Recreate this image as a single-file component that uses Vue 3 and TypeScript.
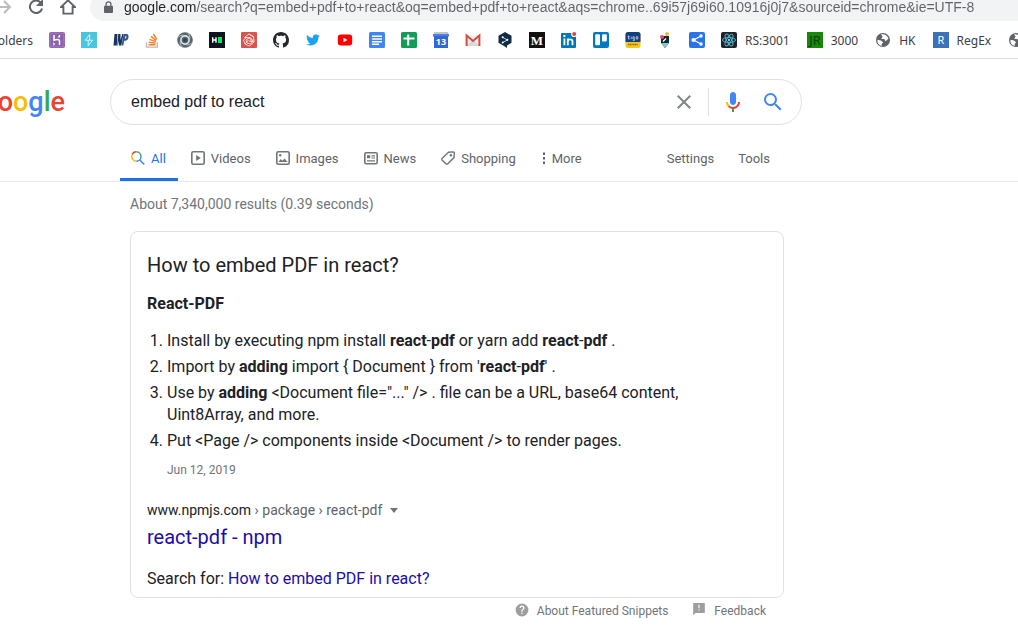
<script setup lang="ts">
import { ref } from 'vue'

interface Step {
  parts: { text: string; strong?: boolean }[]
}

const address = ref(
  'google.com/search?q=embed+pdf+to+react&oq=embed+pdf+to+react&aqs=chrome..69i57j69i60.10916j0j7&sourceid=chrome&ie=UTF-8',
)
const query = ref('embed pdf to react')

const steps: Step[] = [
  {
    parts: [
      { text: 'Install by executing npm install ' },
      { text: 'react', strong: true },
      { text: '-' },
      { text: 'pdf', strong: true },
      { text: ' or yarn add ' },
      { text: 'react', strong: true },
      { text: '-' },
      { text: 'pdf', strong: true },
      { text: ' .' },
    ],
  },
  {
    parts: [
      { text: 'Import by ' },
      { text: 'adding', strong: true },
      { text: " import { Document } from '" },
      { text: 'react', strong: true },
      { text: '-' },
      { text: 'pdf', strong: true },
      { text: "' ." },
    ],
  },
  {
    parts: [
      { text: 'Use by ' },
      { text: 'adding', strong: true },
      { text: ' <Document file="..." /> . file can be a URL, base64 content, Uint8Array, and more.' },
    ],
  },
  { parts: [{ text: 'Put <Page /> components inside <Document /> to render pages.' }] },
]
</script>

<template>
  <div class="browser">
    <div class="toolbar">
      <button class="nav" aria-label="Forward">
        <svg viewBox="0 0 16 16"><path d="M0 8h14M8 2l6 6-6 6" fill="none" stroke="#babcbe" stroke-width="2" /></svg>
      </button>
      <button class="nav" aria-label="Reload">
        <svg viewBox="0 0 16 16"><path d="M13.2 4.2A6.2 6.2 0 1 0 14.1 9.4" fill="none" stroke="#5f6368" stroke-width="2" /><path d="M15 0v7H8z" fill="#5f6368" /></svg>
      </button>
      <button class="nav" aria-label="Home">
        <svg viewBox="0 0 16 16"><path d="M8 1.3 1 8h2.4v6.6h9.2V8H15z" fill="none" stroke="#5f6368" stroke-width="1.9" /></svg>
      </button>
      <div class="omnibox">
        <svg class="lock" viewBox="0 0 10 14"><path d="M1 5h8a1 1 0 0 1 1 1v6a1 1 0 0 1-1 1H1a1 1 0 0 1-1-1V6a1 1 0 0 1 1-1z" fill="#5f6368" /><path d="M2.3 6V3.5a2.7 2.7 0 0 1 5.4 0V6" fill="none" stroke="#5f6368" stroke-width="1.4" /></svg>
        <input v-model="address" class="address" type="text" aria-label="Address" spellcheck="false" />
      </div>
    </div>

    <nav class="bookmarks" aria-label="Bookmarks">
      <a href="#" class="bm folder">Folders</a>
      <a href="#" class="bm" aria-label="Heroku">
        <svg viewBox="0 0 16 16"><rect width="16" height="16" rx="2" fill="#8c62ad" /><rect x="1.2" y="1.2" width="13.6" height="13.6" rx="1" fill="none" stroke="#a98ac3" stroke-width=".7" /><path d="M5 3v5.4c1.8-.8 5.5-1.5 5.5.6v4M10.7 3c0 1-.5 1.8-1.2 2.6" fill="none" stroke="#fff" stroke-width="1.5" /><path d="M4.3 10.2 6.2 12l-1.9 1.7z" fill="#fff" /></svg>
      </a>
      <a href="#" class="bm" aria-label="Strapi">
        <svg viewBox="0 0 16 16"><rect width="16" height="16" fill="#49c5dd" /><path d="M8.7 2.5 4.2 8.2h7.4L7.2 13.7M8.7 2.5v5.7M7.2 8.4v5.3" fill="none" stroke="#d9f6fb" stroke-width="1" /></svg>
      </a>
      <a href="#" class="bm" aria-label="WP">
        <svg viewBox="0 0 16 16"><path d="M1.500 2h3L3.800 13.500H.5zM5.300 2h2.200v6L9.300 2h1.200L8.300 13.500H6L5.500 9l-.7 4.500h-.6z" fill="#17335f" /><path d="M10.600 2h2.900c3 0 2.700 6-.8 6.800h-1.500L10.300 13.500H8.600z" fill="#2f5687" /><path d="M12.300 4h.7c.9 0 .4 2.600-.5 2.600h-.6z" fill="#dce5ef" /></svg>
      </a>
      <a href="#" class="bm" aria-label="Stack Overflow">
        <svg viewBox="0 0 16 16"><path d="M1.500 10.200v4.900h10.800v-4.900" fill="none" stroke="#bcbbbb" stroke-width="1.400" /><path d="M3.500 12.700h7M3.700 10.200l6.900.9M4.400 7.300l6.300 2.300M6 4.400l5.100 4M8.300 2l3.600 5.300" fill="none" stroke="#f48024" stroke-width="1.400" /></svg>
      </a>
      <a href="#" class="bm" aria-label="Spiral">
        <svg viewBox="0 0 16 16"><circle cx="8" cy="8" r="7.8" fill="#58666d" /><circle cx="8" cy="8" r="4.1" fill="none" stroke="#dce2e4" stroke-width="1.6" /><path d="M1 5.500C2.500 3.200 5 2.700 7 3.500M15 10.500c-1.500 2.300-4 2.800-6 2M10.500 1c2.300 1.500 2.800 4 2 6M5.500 15c-2.300-1.500-2.800-4-2-6" fill="none" stroke="#bcc7ca" stroke-width="1" /><circle cx="8" cy="8" r="2" fill="#37474f" /></svg>
      </a>
      <a href="#" class="bm" aria-label="HackerRank">
        <svg viewBox="0 0 16 16"><rect width="16" height="16" fill="#0e141e" /><path d="M3.700 5.200v5.600M7 5.200v5.600M3.700 8H7" stroke="#fff" stroke-width="1.400" /><path d="M9 5h4v6H9z" fill="#00ea64" /></svg>
      </a>
      <a href="#" class="bm" aria-label="Knot">
        <svg viewBox="0 0 16 16"><rect width="16" height="16" rx="1" fill="#d9544d" /><g fill="none" stroke="#f8d9d6" stroke-width="1"><path d="M3.500 5.500 8 2l4.500 2.500L13 10l-4.500 4L4 12 2.500 8l3-2.500L10 6l2 3-2.500 3L6 11 5 8l3-2 2.500 2L9 10" /><path d="M8 2l5 3.500M13 10 8 9M4 12l3.500-4M3.500 5.500 9 5.500" /></g></svg>
      </a>
      <a href="#" class="bm" aria-label="GitHub">
        <svg viewBox="0 0 16 16"><path fill="#24292e" d="M8 0C3.58 0 0 3.58 0 8c0 3.54 2.29 6.53 5.47 7.59.4.07.55-.17.55-.38 0-.19-.01-.82-.01-1.49-2.01.37-2.53-.49-2.69-.94-.09-.23-.48-.94-.82-1.13-.28-.15-.68-.52-.01-.53.63-.01 1.08.58 1.23.82.72 1.21 1.87.87 2.33.66.07-.52.28-.87.51-1.07-1.78-.2-3.64-.89-3.64-3.95 0-.87.31-1.59.82-2.15-.08-.2-.36-1.02.08-2.12 0 0 .67-.21 2.2.82.64-.18 1.32-.27 2-.27s1.36.09 2 .27c1.53-1.04 2.2-.82 2.2-.82.44 1.1.16 1.92.08 2.12.51.56.82 1.27.82 2.15 0 3.07-1.87 3.75-3.65 3.95.29.25.54.73.54 1.48 0 1.07-.01 1.93-.01 2.2 0 .21.15.46.55.38A8.01 8.01 0 0 0 16 8c0-4.42-3.58-8-8-8z" /></svg>
      </a>
      <a href="#" class="bm" aria-label="Twitter">
        <svg viewBox="-2 -2 28 28"><path fill="#1da1f2" d="M23.95 4.57a10 10 0 0 1-2.82.77 4.96 4.96 0 0 0 2.16-2.72c-.95.55-2 .95-3.13 1.18a4.92 4.92 0 0 0-8.38 4.48C7.69 8.1 4.07 6.13 1.64 3.16a4.92 4.92 0 0 0 1.52 6.57 4.9 4.9 0 0 1-2.23-.61v.06a4.92 4.92 0 0 0 3.95 4.83 5 5 0 0 1-2.21.08 4.94 4.94 0 0 0 4.6 3.42A9.87 9.87 0 0 1 0 19.54a13.99 13.99 0 0 0 7.55 2.21c9.05 0 14-7.5 14-13.98 0-.21 0-.42-.02-.63a9.94 9.94 0 0 0 2.42-2.57z" /></svg>
      </a>
      <a href="#" class="bm" aria-label="YouTube">
        <svg viewBox="0 0 16 16"><rect x=".8" y="2.6" width="14.4" height="10.8" rx="3" fill="#f00" /><path d="M6.5 5.8v4.4L10.4 8z" fill="#fff" /></svg>
      </a>
      <a href="#" class="bm" aria-label="Docs">
        <svg viewBox="0 0 16 16"><rect width="16" height="16" rx="1.5" fill="#4285f4" /><path d="M3 4.2h10M3 7h10M3 9.7h10M3 12.3h7" stroke="#fff" stroke-width="1.4" /></svg>
      </a>
      <a href="#" class="bm" aria-label="Sheets">
        <svg viewBox="0 0 16 16"><rect width="16" height="16" rx="1.5" fill="#0f9d58" /><path d="M2.5 6.5h11M7.2 2.5v11" stroke="#fff" stroke-width="2" /></svg>
      </a>
      <a href="#" class="bm" aria-label="Calendar">
        <svg viewBox="0 0 16 16"><path d="M1 0h14v5H1z" fill="#c3c5c9" /><path d="M0 2h16v2l-1 1v11H1V5L0 4z" fill="#3367d6" /><path d="M0 2h16v2H0z" fill="#4f80e3" /><text x="8" y="13" text-anchor="middle" font-size="9" font-weight="700" fill="#fff">13</text></svg>
      </a>
      <a href="#" class="bm" aria-label="Gmail">
        <svg viewBox="0 0 16 16"><path d="M1 3h14v11H1z" fill="#f1f1f1" /><path d="M1 14 7 8.5h2L15 14z" fill="#d9d9d9" /><path d="M1.6 14V3.5L8 9l6.400-5.500V14" fill="none" stroke="#d54b3d" stroke-width="2" /></svg>
      </a>
      <a href="#" class="bm" aria-label="DeepL">
        <svg viewBox="0 0 16 16"><path d="M8 0 14.5 3.8v7L10 13.5v2.5L7 14 1.5 10.8v-7z" fill="#0f2b46" /><path d="M5.5 5.3 10.5 8l-5 2.5" fill="none" stroke="#d7dde2" stroke-width=".9" /><circle cx="5.700" cy="5.200" r="1" fill="#fff" /><circle cx="10.400" cy="7.800" r="1" fill="#fff" /><circle cx="5.700" cy="10.500" r="1" fill="#fff" /></svg>
      </a>
      <a href="#" class="bm" aria-label="Medium">
        <svg viewBox="0 0 16 16"><rect width="16" height="16" fill="#12100e" /><text x="8" y="12.5" text-anchor="middle" font-size="13" font-weight="700" class="serif" fill="#fff">M</text></svg>
      </a>
      <a href="#" class="bm" aria-label="LinkedIn">
        <svg viewBox="0 0 16 16"><rect y="1" width="15" height="15" rx="1" fill="#0077b5" /><path d="M3.400 6.500v6.700M6.800 13.200V6.500M6.800 9.600c0-3 4.700-3 4.700 0v3.600" fill="none" stroke="#fff" stroke-width="1.800" /><circle cx="3.400" cy="4" r="1.200" fill="#fff" /><circle cx="13" cy="2.200" r="2.800" fill="#fff" /><circle cx="13.200" cy="2" r="2" fill="#ef403d" /></svg>
      </a>
      <a href="#" class="bm" aria-label="Trello">
        <svg viewBox="0 0 16 16"><rect width="16" height="16" rx="2" fill="#0079bf" /><rect x="2.2" y="2.2" width="4.8" height="11" rx="1" fill="#fff" /><rect x="9" y="2.2" width="4.8" height="7.3" rx="1" fill="#fff" /></svg>
      </a>
      <a href="#" class="bm" aria-label="Tigo Sports">
        <svg viewBox="0 0 16 16"><rect x=".5" width="15" height="16" rx="2.5" fill="#f5c51c" /><path d="M3 0h10q2.500 0 2.500 2.500V10H.5V2.500Q.5 0 3 0z" fill="#15407f" /><path d="M3.500 3.500v3.500h1.300M2.700 4.700h2.100M6.200 4.600v2.600M8.900 4.700h-1v2.300h1.400V4.600M9.300 7v1.600H7.800M11.200 4.700h1.600v2.300h-1.600z" fill="none" stroke="#dfe7f1" stroke-width=".7" /><path d="M3 12.500h10" stroke="#806d2b" stroke-width="1.400" stroke-dasharray="1.200 .5" /></svg>
      </a>
      <a href="#" class="bm" aria-label="Pencil">
        <svg viewBox="0 0 16 16"><path d="M4 4h8v7l-4 5-4-5z" fill="#0e2b3c" /><path d="M4 11h8l-4 5z" fill="#8ac7bd" /><circle cx="5" cy="5" r="2" fill="#ef4a55" /><circle cx="10" cy="2" r="2" fill="#f6b63c" /><path d="m6 9.500 3-3" stroke="#fff" stroke-width="1.200" /></svg>
      </a>
      <a href="#" class="bm" aria-label="Share">
        <svg viewBox="0 0 16 16"><rect width="16" height="16" rx="2" fill="#2874e8" /><path d="M12 4 4.500 8l7.500 4" fill="none" stroke="#fff" stroke-width="1.100" /><circle cx="12" cy="4" r="1.700" fill="#fff" /><circle cx="4.500" cy="8" r="2.100" fill="#fff" /><circle cx="12" cy="12" r="1.700" fill="#fff" /></svg>
      </a>
      <a href="#" class="bm">
        <svg viewBox="0 0 16 16"><rect width="16" height="16" rx="2" fill="#20232a" /><g fill="none" stroke="#53b9d1" stroke-width=".9"><ellipse cx="8" cy="8" rx="6.6" ry="2.5" /><ellipse cx="8" cy="8" rx="6.6" ry="2.5" transform="rotate(60 8 8)" /><ellipse cx="8" cy="8" rx="6.6" ry="2.5" transform="rotate(120 8 8)" /></g><circle cx="8" cy="8" r="1.2" fill="#61dafb" /></svg>
        <span>RS:3001</span>
      </a>
      <a href="#" class="bm">
        <svg viewBox="0 0 16 16"><rect width="16" height="16" fill="#148a08" /><text x="8" y="13" text-anchor="middle" font-size="13" fill="#173a12">JR</text></svg>
        <span>3000</span>
      </a>
      <a href="#" class="bm">
        <svg viewBox="0 0 16 16"><circle cx="8" cy="8" r="7" fill="#5f6368" /><path d="M2.500 7.800 6 8.500l2.200 2-1.500 1.200v2.200C4 13.500 2 11 2.500 7.800zM6 2.500C9.500 1.600 12.800 4 13.500 6.700L10.500 9.200 9.300 6.900 6.300 7 7.600 4.500z" fill="#fff" /></svg>
        <span>HK</span>
      </a>
      <a href="#" class="bm">
        <svg viewBox="0 0 16 16"><rect width="16" height="16" fill="#3d72b8" /><text x="8" y="12" text-anchor="middle" font-size="11" fill="#fff">R</text></svg>
        <span>RegEx</span>
      </a>
      <a href="#" class="bm" aria-label="Site">
        <svg viewBox="0 0 16 16"><circle cx="8" cy="8" r="7" fill="#5f6368" /><path d="M2.500 7.800 6 8.500l2.200 2-1.500 1.200v2.200C4 13.500 2 11 2.500 7.800zM6 2.500C9.500 1.600 12.800 4 13.500 6.700L10.500 9.200 9.300 6.900 6.300 7 7.600 4.500z" fill="#fff" /></svg>
      </a>
    </nav>
  </div>

  <header class="header">
    <div class="search-row">
      <a href="#" class="logo" aria-label="Google"><span class="blue">G</span><span class="red">o</span><span class="yellow">o</span><span class="blue">g</span><span class="green">l</span><span class="red">e</span></a>
      <form class="search" role="search" @submit.prevent>
        <input v-model="query" class="query" type="text" aria-label="Search" spellcheck="false" />
        <button type="button" class="clear" aria-label="Clear" @click="query = ''">
          <svg viewBox="0 0 24 24"><path fill="#80868b" d="M19 6.410L17.590 5 12 10.590 6.410 5 5 6.410 10.590 12 5 17.590 6.410 19 12 13.410 17.590 19 19 17.590 13.410 12z" /></svg>
        </button>
        <span class="divider"></span>
        <button type="button" class="tool" aria-label="Search by voice">
          <svg viewBox="0 0 24 24"><path fill="#4285f4" d="m12 15c1.660 0 3-1.310 3-2.970v-7.020c0-1.660-1.340-3.010-3-3.010s-3 1.340-3 3.010v7.020c0 1.660 1.340 2.970 3 2.970z" /><path fill="#34a853" d="m11 18.080h2v3.920h-2z" /><path fill="#fbbc05" d="m7.050 16.870c-1.270-1.330-2.050-2.830-2.050-4.870h2c0 1.450.56 2.420 1.470 3.380v.32l-1.150 1.180z" /><path fill="#ea4335" d="m12 16.930a4.970 5.250 0 0 1-3.540-1.550l-1.410 1.490c1.260 1.340 3.020 2.130 4.950 2.130 3.870 0 6.990-2.920 6.990-7h-1.990c0 2.920-2.240 4.930-5 4.930z" /></svg>
        </button>
        <button type="submit" class="tool" aria-label="Google Search">
          <svg viewBox="0 0 24 24"><path fill="#4285f4" d="M15.500 14h-.79l-.28-.27A6.470 6.470 0 0 0 16 9.500 6.500 6.500 0 1 0 9.500 16c1.610 0 3.090-.59 4.230-1.570l.27.28v.79l5 4.990L20.490 19l-4.990-5zm-6 0C7.010 14 5 11.990 5 9.500S7.010 5 9.500 5 14 7.010 14 9.500 11.990 14 9.500 14z" /></svg>
        </button>
      </form>
    </div>

    <nav class="tabs" aria-label="Search types">
      <a href="#" class="tab active" aria-current="page">
        <svg viewBox="0 0 16 16"><g fill="none" stroke-width="1.500"><path d="M2.200 4.500A4.700 4.700 0 0 1 6.300 1.800" stroke="#ea4335" /><path d="M6.300 1.800a4.700 4.700 0 0 1 4.700 4.700" stroke="#34a853" /><path d="M2.200 4.500A4.700 4.700 0 0 0 6.300 11.200" stroke="#fbbc05" /><path d="M11 6.500a4.700 4.700 0 0 1-4.700 4.700M9.600 9.800l4.700 4.700" stroke="#4285f4" /></g></svg>
        <span>All</span>
      </a>
      <a href="#" class="tab">
        <svg viewBox="0 0 16 16"><rect x="1.800" y="1.800" width="12.400" height="12.400" rx="1.500" fill="none" stroke="#70757a" stroke-width="1.600" /><path d="M6.200 4.900v6.200L10.800 8z" fill="#70757a" /></svg>
        <span>Videos</span>
      </a>
      <a href="#" class="tab">
        <svg viewBox="0 0 16 16"><rect x="1.800" y="1.800" width="12.400" height="12.400" rx="1.500" fill="none" stroke="#70757a" stroke-width="1.600" /><path d="m3.500 12 2.200-3 1.600 1.700 2.300-2.300L12.500 12z" fill="#70757a" /><circle cx="5.200" cy="5.200" r="1.200" fill="#70757a" /></svg>
        <span>Images</span>
      </a>
      <a href="#" class="tab">
        <svg viewBox="0 0 16 16"><rect x="1.800" y="2.800" width="12.400" height="11" rx="1.500" fill="none" stroke="#70757a" stroke-width="1.600" /><path d="M4 5.200h3.200v3H4z" fill="#70757a" /><path d="M8.500 5.800H12M8.500 8H12M4 10.800h8" stroke="#70757a" stroke-width="1.200" /></svg>
        <span>News</span>
      </a>
      <a href="#" class="tab">
        <svg viewBox="0 0 16 16"><path d="M8.500 2.200 2 8.600a1 1 0 0 0 0 1.300L6.300 14a1 1 0 0 0 1.300 0L14 7.600 14.300 3a1 1 0 0 0-1-1.100z" fill="none" stroke="#70757a" stroke-width="1.400" /><circle cx="10.900" cy="5.200" r="1.200" fill="#70757a" /></svg>
        <span>Shopping</span>
      </a>
      <button type="button" class="tab more">
        <svg viewBox="0 0 8 16"><path d="M3 2.500h2v2.500H3zM3 7h2v2.500H3zM3 11.500h2v2.500H3z" fill="#5f6368" /></svg>
        <span>More</span>
      </button>
      <button type="button" class="tab settings">Settings</button>
      <button type="button" class="tab">Tools</button>
    </nav>
  </header>

  <main class="results">
    <p class="stats">About 7,340,000 results (0.39 seconds)</p>

    <section class="card">
      <h2 class="question">How to embed PDF in react?</h2>
      <h3 class="subject">React-PDF</h3>
      <ol class="steps">
        <li v-for="(step, i) in steps" :key="i">
          <template v-for="(part, j) in step.parts" :key="j"><b v-if="part.strong">{{ part.text }}</b><template v-else>{{ part.text }}</template></template>
        </li>
      </ol>
      <time class="date" datetime="2019-06-12">Jun 12, 2019</time>
      <div class="source">
        <cite>www.npmjs.com <span>› package › react-pdf</span></cite>
        <button type="button" class="caret" aria-label="Result options"></button>
      </div>
      <a href="#" class="result-title">react-pdf - npm</a>
      <p class="search-for">Search for: <a href="#">How to embed PDF in react?</a></p>
    </section>

    <footer class="notes">
      <a href="#">
        <svg viewBox="0 0 24 24"><path fill="#9e9e9e" d="M12 1a11 11 0 1 0 0 22 11 11 0 0 0 0-22zm1 18h-2.200v-2.200H13zm2.200-8.200-.9.900c-.8.800-1.300 1.400-1.300 3.100h-2.200v-.5c0-1.200.5-2.200 1.300-3l1.200-1.300c.4-.4.600-.9.600-1.500a2 2 0 0 0-4 0H7.700a4.300 4.300 0 0 1 8.600 0c0 .9-.4 1.700-1.100 2.300z" /></svg>
        <span>About Featured Snippets</span>
      </a>
      <a href="#">
        <svg viewBox="0 0 24 24"><path fill="#9e9e9e" fill-rule="evenodd" d="M2 0h20v17H6l-4 4zm9 3v6h2V3zm0 8v2h2v-2z" /></svg>
        <span>Feedback</span>
      </a>
    </footer>
  </main>
</template>

<style>
body {
  margin: 0;
  background: #fff;
  color: #202124;
  font-family: Roboto, "Liberation Sans", sans-serif;
  overflow-x: hidden;
}
</style>

<style scoped>
a {
  color: #1a0dab;
  text-decoration: none;
}
button {
  padding: 0;
  border: 0;
  background: none;
  font: inherit;
  color: inherit;
  cursor: pointer;
}
input {
  padding: 0;
  border: 0;
  outline: 0;
  background: none;
}
svg {
  display: block;
  flex: none;
}
p,
h2,
h3,
ol {
  margin: 0;
  padding: 0;
  font-weight: 400;
}

.browser {
  overflow: hidden;
  border-bottom: 1px solid #dadce0;
  font-family: "Noto Sans", "Open Sans", sans-serif;
}
.toolbar {
  display: flex;
  align-items: center;
  gap: 16px;
  margin: -7px 0 0 -4px;
}
.nav svg {
  width: 16px;
  height: 16px;
}
.omnibox {
  flex: 1;
  display: flex;
  align-items: center;
  gap: 11px;
  height: 28px;
  margin: 0 -40px 0 -2px;
  padding-left: 14px;
  border-radius: 14px;
  background: #f1f3f4;
}
.lock {
  width: 9px;
  height: 13px;
}
.address {
  flex: 1;
  min-width: 0;
  height: 22px;
  font: 14px "Liberation Sans", "Noto Sans", sans-serif;
  color: transparent;
  caret-color: #202124;
  background: linear-gradient(90deg, #202124 72px, #5f6368 72px);
  background-clip: text;
  -webkit-background-clip: text;
}
.bookmarks {
  display: flex;
  align-items: center;
  height: 37px;
  margin-left: -20px;
  font-size: 12px;
  white-space: nowrap;
}
.bm {
  flex: none;
  display: flex;
  align-items: center;
  gap: 8px;
  padding: 1px 8px 0;
  color: #3c4043;
}
.bm svg {
  width: 16px;
  height: 16px;
}
.bm span {
  padding-right: 1px;
}
.folder {
  justify-content: flex-end;
  width: 45px;
}
.serif {
  font-family: "Liberation Serif", serif;
}

.header {
  padding-top: 20px;
  border-bottom: 1px solid #ebebeb;
}
.search-row {
  display: flex;
  align-items: center;
}
.logo {
  flex: none;
  display: flex;
  justify-content: flex-end;
  width: 65px;
  margin-right: 45px;
  font: 500 27px/46px Roboto, sans-serif;
}
.blue {
  color: #4285f4;
}
.red {
  color: #ea4335;
}
.yellow {
  color: #fbbc05;
}
.green {
  color: #34a853;
}
.search {
  flex: 1;
  display: flex;
  align-items: center;
  box-sizing: border-box;
  max-width: 692px;
  height: 46px;
  padding: 0 16px 0 20px;
  border: 1px solid #dfe1e5;
  border-radius: 23px;
}
.query {
  flex: 1;
  min-width: 0;
  height: 32px;
  font: 16px "Liberation Sans", sans-serif;
  color: #202124;
}
.clear svg {
  width: 24px;
  height: 24px;
}
.divider {
  height: 28px;
  margin: 0 1px 0 12px;
  border-left: 1px solid #dfe1e5;
}
.tool {
  width: 24px;
  margin-left: 11px;
}
.tool + .tool {
  margin-left: 16px;
}
.tool svg {
  width: 24px;
  height: 24px;
}

.tabs {
  display: flex;
  gap: 24px;
  height: 44px;
  margin-top: 12px;
  padding-left: 130px;
  font-size: 13px;
  color: #5f6368;
}
.tab {
  display: flex;
  align-items: center;
  gap: 5px;
  box-sizing: border-box;
  padding-bottom: 2px;
  color: #5f6368;
}
.tab svg {
  width: 16px;
  height: 16px;
}
.active {
  margin: 0 -12px 0 -10px;
  padding: 1px 12px 0 10px;
  border-bottom: 3px solid #1a73e8;
  color: #1a73e8;
}
.more {
  gap: 4px;
}
.more svg {
  width: 8px;
}
.settings {
  margin-left: 61px;
}

.results {
  box-sizing: border-box;
  max-width: 784px;
  padding-left: 130px;
}
.stats {
  padding-top: 12px;
  font-size: 14px;
  line-height: 20px;
  color: #70757a;
}
.card {
  margin-top: 17px;
  padding: 20px 16px 7px;
  border: 1px solid #dfe1e5;
  border-radius: 8px;
}
.question {
  font-size: 20px;
  line-height: 26px;
}
.subject {
  margin-top: 15px;
  font-size: 16px;
  font-weight: 700;
  line-height: 22px;
}
.steps {
  max-width: 540px;
  margin-top: 15px;
  padding-left: 20px;
  font-size: 16px;
  line-height: 22px;
}
.steps li {
  margin-bottom: 4px;
}
.date {
  display: block;
  margin: 10px 0 0 20px;
  font-size: 12px;
  line-height: 16px;
  color: #70757a;
}
.source {
  display: flex;
  align-items: center;
  gap: 8px;
  margin-top: 22px;
  font-size: 14px;
  line-height: 20px;
}
.source cite {
  font-style: normal;
}
.source span {
  color: #5f6368;
}
.caret {
  border: 4px solid transparent;
  border-top: 5px solid #70757a;
  border-bottom: 0;
}
.result-title {
  display: block;
  margin-top: 4px;
  font-size: 20px;
  line-height: 26px;
}
.search-for {
  margin-top: 18px;
  font-size: 16px;
  line-height: 22px;
}
.notes {
  display: flex;
  justify-content: flex-end;
  gap: 24px;
  padding: 5px 18px 0 0;
  font-size: 12px;
  line-height: 16px;
}
.notes a {
  display: flex;
  gap: 8px;
  color: #70757a;
}
.notes svg {
  width: 14px;
  height: 14px;
}
</style>
